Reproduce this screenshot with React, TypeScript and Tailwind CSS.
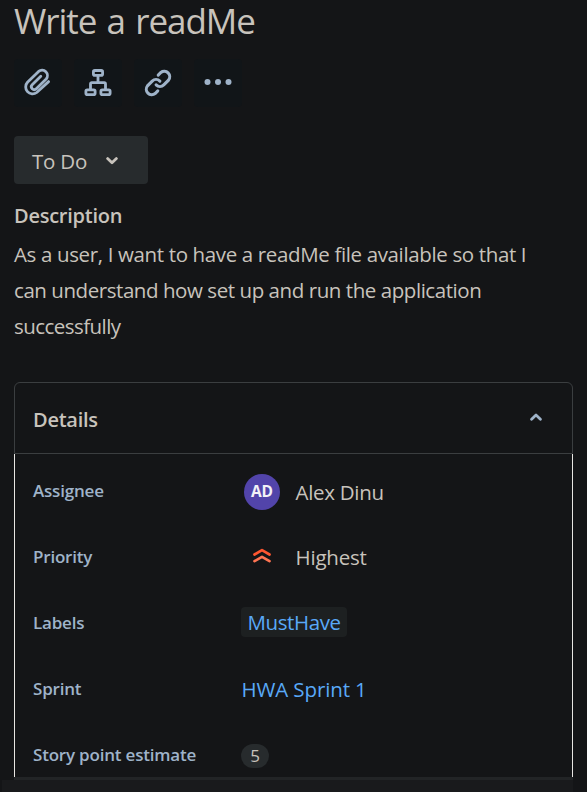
import type { ReactNode } from 'react';

function IconButton({ label, children }: { label: string; children: ReactNode }) {
  return (
    <button aria-label={label} className="flex size-12 items-center justify-center rounded-[4px] bg-[#111518] text-[#9fb3c9]">
      {children}
    </button>
  );
}

function Row({ label, children }: { label: string; children: ReactNode }) {
  return (
    <div className="flex h-[66px] shrink-0 items-center">
      <div className="w-[208px] text-[17px] leading-6 font-semibold tracking-[-0.2px] text-[#9fb3c9]">{label}</div>
      {children}
    </div>
  );
}

export default function App() {
  return (
    <div className="flex h-[792px] w-[587px] flex-col bg-[#141517] font-['Open_Sans','Noto_Sans',sans-serif] whitespace-nowrap text-[#c8c3bc]">
      <div className="flex flex-col items-start pl-[14px]">
        <h1 className="h-[58px] text-[35px] leading-[42px] tracking-[-1.05px] [word-spacing:2.2px]">Write a readMe</h1>
        <div className="mt-px flex gap-3">
          <IconButton label="Attach">
            <svg width="28" height="28" viewBox="0 0 28 28" fill="none" stroke="currentColor" strokeWidth="2.8" strokeLinecap="round" strokeLinejoin="round" overflow="visible">
              <path d="M24.6 12.6 12.7 23.5a6.9 6.9 0 0 1-9.2-10.2L14.6 2.4a5.4 5.4 0 0 1 7.6 7.6L12.3 19.8a2.9 2.9 0 0 1-4.1-4.1l8.6-8.5" />
            </svg>
          </IconButton>
          <IconButton label="Add child issue">
            <svg width="28" height="28" viewBox="0 0.4 28 28" fill="none" stroke="currentColor" strokeWidth="2.8" strokeLinejoin="round">
              <rect x="9.4" y="1.9" width="9.2" height="4.8" rx="1.4" />
              <rect x="1.9" y="21.3" width="9.2" height="4.8" rx="1.4" />
              <rect x="16.9" y="21.3" width="9.2" height="4.8" rx="1.4" />
              <path d="M14 7v7M6.5 21v-5.7a1.3 1.3 0 0 1 1.3-1.3h12.4a1.3 1.3 0 0 1 1.3 1.3V21" />
            </svg>
          </IconButton>
          <IconButton label="Link issue">
            <svg width="28" height="28" viewBox="0.7 0.9 26.6 26.6" fill="none" stroke="currentColor" strokeWidth="2.9" strokeLinecap="round">
              <path d="m14.2 6.7 2.5-2.5a5.2 5.2 0 0 1 7.3 7.3l-4.5 4.5a5.2 5.2 0 0 1-7.3 0" />
              <path d="m13.8 21.7-2.5 2.5A5.2 5.2 0 0 1 4 16.9l4.5-4.5a5.2 5.2 0 0 1 7.3 0" />
            </svg>
          </IconButton>
          <IconButton label="More actions">
            <svg width="30" height="30" viewBox="0 0 30 30" fill="currentColor">
              <circle cx="4.5" cy="14" r="3" />
              <circle cx="15" cy="14" r="3" />
              <circle cx="25.5" cy="14" r="3" />
            </svg>
          </IconButton>
        </div>
        <button className="mt-[29px] flex h-12 w-[134px] items-center rounded-[4px] bg-[#272b2d] pl-[18px]">
          <span className="w-[56px] pt-px text-left text-[20.5px] leading-6 font-medium tracking-[-0.2px]">To Do</span>
          <svg className="mt-px ml-[18px]" width="12" height="8" viewBox="0 0 12 8" fill="none" stroke="currentColor" strokeWidth="2.8" strokeLinecap="round" strokeLinejoin="round">
            <path d="m1.6 1.6 4.4 4.2 4.4-4.2" />
          </svg>
        </button>
        <h2 className="mt-[18px] text-[20px] leading-7 font-semibold tracking-[-0.25px]">Description</h2>
        <p className="mt-[6px] text-[20.5px] leading-9">
          <span className="tracking-[-0.36px]">As a user, I want to have a readMe file available so that I</span><br />
          <span className="tracking-[-0.44px]">can understand how set up and run the application</span><br />
          <span className="tracking-[-0.55px]">successfully</span>
        </p>
      </div>
      <section className="mx-[14px] mt-[38px] flex min-h-0 flex-1 flex-col">
        <header className="flex h-[72px] shrink-0 items-center justify-between rounded-t-[6px] border border-[#3b3e40] pr-[30px] pl-[18px]">
          <h2 className="pt-[3px] text-[20px] leading-7 font-semibold tracking-[-0.25px]">Details</h2>
          <svg className="-mt-[2px]" width="12" height="8" viewBox="0 0 12 8" fill="none" stroke="#9fb3c9" strokeWidth="2.8" strokeLinecap="round" strokeLinejoin="round">
            <path d="m1.6 6.2 4.4-4.2 4.4 4.2" />
          </svg>
        </header>
        <div className="flex h-[323px] shrink-0 flex-col border-x border-[#e8e6e3] pt-[4px] pl-[18px]">
          <Row label="Assignee">
            <span className="mt-[2px] ml-[3px] flex size-9 items-center justify-center rounded-full bg-[#5244aa] pb-px text-[15.5px] font-bold tracking-[-0.2px] text-[#f3f1f7]">AD</span>
            <span className="mt-[3px] ml-[15.5px] text-[20.5px] tracking-[-0.3px]">Alex Dinu</span>
          </Row>
          <Row label="Priority">
            <svg className="-mt-[2px] ml-3" width="18" height="16" viewBox="0 0 18 16" fill="none" strokeWidth="2.7" strokeLinecap="round" strokeLinejoin="round">
              <path d="m1.5 6.5 7.5-4.3 7.5 4.3" stroke="#ff5630" />
              <path d="m1.5 13.2 7.5-4.3 7.5 4.3" stroke="#ff7452" />
            </svg>
            <span className="ml-[24.5px] text-[20.5px] tracking-[-0.2px]">Highest</span>
          </Row>
          <Row label="Labels">
            <span className="-mt-[2px] flex h-[30px] w-[106px] items-center rounded-[4px] bg-[#1d2021] pt-px pl-[6.5px] text-[20.5px] tracking-[-0.4px] text-[#59a9f8]">MustHave</span>
          </Row>
          <Row label="Sprint">
            <span className="ml-[0.5px] text-[20.5px] tracking-[-0.12px] text-[#59a9f8]">HWA Sprint 1</span>
          </Row>
          <Row label="Story point estimate">
            <span className="mt-[2px] flex h-6 w-7 items-center justify-center rounded-full bg-[#272b2d] text-[17px]">5</span>
          </Row>
        </div>
        <div className="h-[3px] shrink-0 bg-[#222426]" />
        <div className="-ml-3 flex-1 bg-[#191a1c]" />
      </section>
    </div>
  );
}
